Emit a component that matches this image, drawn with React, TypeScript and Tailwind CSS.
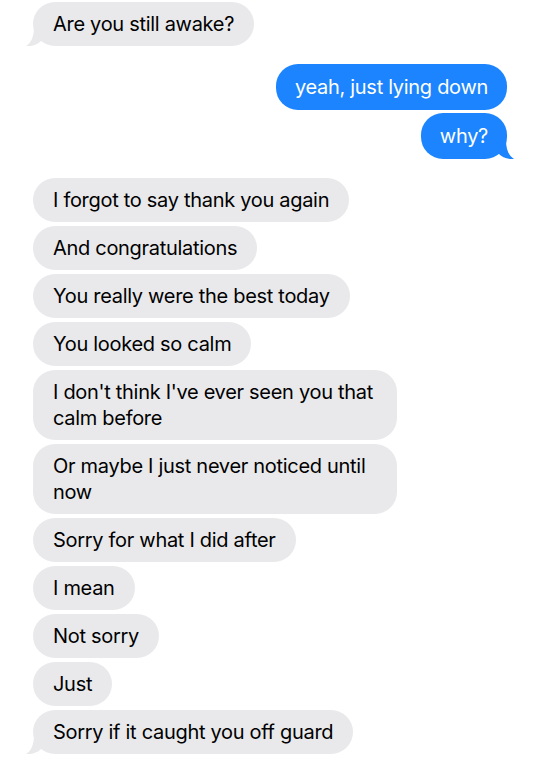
type Msg = { text: string; tail?: boolean }

const FIRST: Msg[] = [{ text: "Are you still awake?", tail: true }]

const MINE: Msg[] = [{ text: "yeah, just lying down" }, { text: "why?", tail: true }]

const THEIRS: Msg[] = [
  { text: "I forgot to say thank you again" },
  { text: "And congratulations" },
  { text: "You really were the best today" },
  { text: "You looked so calm" },
  { text: "I don't think I've ever seen you that calm before" },
  { text: "Or maybe I just never noticed until now" },
  { text: "Sorry for what I did after" },
  { text: "I mean" },
  { text: "Not sorry" },
  { text: "Just" },
  { text: "Sorry if it caught you off guard", tail: true },
]

function TailLeft() {
  return (
    <svg className="absolute -left-[7px] bottom-[-1px]" width="20" height="20" viewBox="0 0 20 20">
      <path d="M8 0 C8 10 5 16 0 19 C7 19.5 12 17 15 14 L18 0 Z" fill="#e9e9eb" />
    </svg>
  )
}

function TailRight() {
  return (
    <svg className="absolute -right-[7px] bottom-[-1px]" width="20" height="20" viewBox="0 0 20 20">
      <path d="M12 0 C12 10 15 16 20 19 C13 19.5 8 17 5 14 L2 0 Z" fill="#1b84fe" />
    </svg>
  )
}

function Theirs({ m }: { m: Msg }) {
  return (
    <div className="relative max-w-[364px] self-start rounded-[22px] bg-[#e9e9eb] px-[20px] py-[9px] text-[20px] leading-[26px] text-black">
      {m.tail && <TailLeft />}
      <span className="relative">{m.text}</span>
    </div>
  )
}

function Mine({ m }: { m: Msg }) {
  return (
    <div className="relative max-w-[364px] self-end rounded-[22px] bg-[#1b84fe] px-[19px] py-[10px] text-[20px] leading-[26px] text-white">
      {m.tail && <TailRight />}
      <span className="relative">{m.text}</span>
    </div>
  )
}

export default function App() {
  return (
    <div
      className="min-h-[761px] w-[540px] overflow-hidden bg-white pl-[33px] pr-[33px] pt-[2px] tracking-[-0.3px]"
      style={{ fontFamily: "Inter, 'Noto Sans', sans-serif" }}
    >
      <div className="flex flex-col gap-[4px]">
        {FIRST.map((m) => (
          <Theirs key={m.text} m={m} />
        ))}
      </div>

      <div className="mt-[18px] flex flex-col gap-[3px]">
        {MINE.map((m) => (
          <Mine key={m.text} m={m} />
        ))}
      </div>

      <div className="mt-[19px] flex flex-col gap-[4px]">
        {THEIRS.map((m) => (
          <Theirs key={m.text} m={m} />
        ))}
      </div>
    </div>
  )
}
